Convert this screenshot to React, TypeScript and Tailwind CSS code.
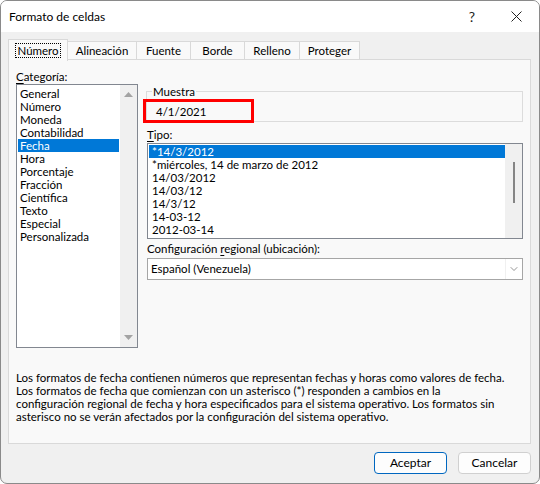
import { ChevronDown } from "lucide-react";

const CATEGORIES = [
  "General",
  "Número",
  "Moneda",
  "Contabilidad",
  "Fecha",
  "Hora",
  "Porcentaje",
  "Fracción",
  "Científica",
  "Texto",
  "Especial",
  "Personalizada",
];

const TYPES = [
  "*14/3/2012",
  "*miércoles, 14 de marzo de 2012",
  "14/03/2012",
  "14/03/12",
  "14/3/12",
  "14-03-12",
  "2012-03-14",
];

const TABS = [
  { label: "Número", w: "w-[60px]" },
  { label: "Alineación", w: "w-[70px]" },
  { label: "Fuente", w: "w-[55px]" },
  { label: "Borde", w: "w-[55px]" },
  { label: "Relleno", w: "w-[56px]" },
  { label: "Proteger", w: "w-[61px]" },
];

const DESCRIPTION = [
  "Los formatos de fecha contienen números que representan fechas y horas como valores de fecha.",
  "Los formatos de fecha que comienzan con un asterisco (*) responden a cambios en la",
  "configuración regional de fecha y hora especificados para el sistema operativo. Los formatos sin",
  "asterisco no se verán afectados por la configuración del sistema operativo.",
];

function Tab({ label, w, active }: { label: string; w: string; active: boolean }) {
  if (active) {
    return (
      <div
        className={`${w} relative z-10 -mr-px flex h-[22px] items-center justify-center border border-b-0 border-[#d9d9d9] bg-[#f9f9f9]`}
      >
        <span className="border border-dotted border-black px-[1px] leading-[13px]">{label}</span>
      </div>
    );
  }
  return (
    <div
      className={`${w} -mr-px mt-[2px] flex h-[19px] items-center justify-center border border-b-0 border-[#d9d9d9] bg-[#f9f9f9]`}
    >
      {label}
    </div>
  );
}

function TitleBar() {
  return (
    <div className="flex h-[31px] shrink-0 items-center bg-white pl-[8px]">
      <span className="flex-1 text-[12px]">Formato de celdas</span>
      <span className="mr-[36px] text-[14px] text-[#222]">?</span>
      <svg width="11" height="11" viewBox="0 0 11 11" className="mr-[17px]">
        <path d="M0.5 0.5 L10.5 10.5 M10.5 0.5 L0.5 10.5" stroke="#222" strokeWidth="1" fill="none" />
      </svg>
    </div>
  );
}

function CategoryList() {
  return (
    <div className="flex h-[264px] w-[122px] border border-[#828790] bg-white">
      <div className="flex-1 px-[1px] pt-[2px]">
        {CATEGORIES.map((c) => (
          <div
            key={c}
            className={`h-[13px] pl-[2px] leading-[13px] ${c === "Fecha" ? "bg-[#0078d7] text-white" : ""}`}
          >
            {c}
          </div>
        ))}
      </div>
      <div className="flex w-[17px] flex-col items-center justify-between bg-[#f0f0f0] py-[7px]">
        <svg width="9" height="5" viewBox="0 0 9 5">
          <path d="M0 5 L4.5 0 L9 5 Z" fill="#a3a3a3" />
        </svg>
        <svg width="9" height="5" viewBox="0 0 9 5">
          <path d="M0 0 L4.5 5 L9 0 Z" fill="#a3a3a3" />
        </svg>
      </div>
    </div>
  );
}

function TypeList() {
  return (
    <div className="ml-[1px] flex h-[96px] border border-[#828790] bg-white">
      <div className="flex-1 pl-[1px] pt-[1px]">
        {TYPES.map((t, i) => (
          <div key={t} className={`h-[13px] pl-[3px] leading-[13px] ${i === 0 ? "bg-[#0078d7] text-white" : ""}`}>
            {t}
          </div>
        ))}
      </div>
      <div className="flex w-[17px] justify-center bg-[#f0f0f0] pt-[18px]">
        <div className="h-[41px] w-[2px] bg-[#858585]" />
      </div>
    </div>
  );
}

export default function App() {
  return (
    <div className="flex h-[484px] w-[540px] flex-col overflow-hidden rounded-[7px] border border-[#8a8a8a] bg-[#f0f0f0] font-['Lato',sans-serif] text-[11.5px] text-black">
      <TitleBar />

      <div className="flex flex-1 flex-col pl-[7px] pt-[7px]">
        <div className="flex h-[21px] items-start">
          {TABS.map((t, i) => (
            <Tab key={t.label} label={t.label} w={t.w} active={i === 0} />
          ))}
        </div>

        <div className="relative -mt-px h-[385px] w-[523px] border border-[#d9d9d9] bg-[#f9f9f9] px-[7px]">
          <div className="flex gap-[8px]">
            <div className="flex flex-col pt-[10px]">
              <div className="h-[13px] leading-[13px]">
                <span className="underline underline-offset-2">C</span>ategoría:
              </div>
              <div className="mt-[1px]">
                <CategoryList />
              </div>
            </div>

            <div className="flex w-[377px] flex-col pt-[25px]">
              <fieldset className="h-[37px] border border-[#dcdcdc]">
                <legend className="ml-[5px] px-[1px] leading-[13px]">Muestra</legend>
                <div className="mt-[7px] pl-[9px] leading-[13px]">4/1/2021</div>
              </fieldset>

              <div className="mt-[6px] ml-[1px] h-[13px] leading-[13px]">
                <span className="underline underline-offset-2">T</span>ipo:
              </div>
              <div className="mt-[2px]">
                <TypeList />
              </div>

              <div className="mt-[3px] ml-[1px] h-[13px] leading-[13px]">
                Configuración <span className="underline underline-offset-2">r</span>egional (ubicación):
              </div>
              <div className="mt-[3px] ml-[1px] flex h-[22px] items-center border border-[#a6a6a6] bg-white">
                <span className="flex-1 pl-[3px]">Español (Venezuela)</span>
                <div className="flex h-full w-[17px] items-center justify-center border-l border-[#f0f0f0]">
                  <ChevronDown size={12} strokeWidth={1.25} color="#555" />
                </div>
              </div>
            </div>
          </div>

          <div className="mt-[23px] leading-[13px]">
            {DESCRIPTION.map((line) => (
              <div key={line} className="whitespace-nowrap">
                {line}
              </div>
            ))}
          </div>

          <div className="absolute left-[134px] top-[39px] h-[24px] w-[111px] border-[3px] border-[#ff0000]" />
        </div>

        <div className="mt-[8px] flex justify-end gap-[11px] pr-[8px]">
          <button className="h-[22px] w-[73px] rounded-[4px] border border-[#0067c0] bg-[#fdfdfd] text-[12px]">
            Aceptar
          </button>
          <button className="h-[22px] w-[73px] rounded-[4px] border border-[#d0d0d0] bg-[#fdfdfd] text-[12px]">
            Cancelar
          </button>
        </div>
      </div>
    </div>
  );
}
